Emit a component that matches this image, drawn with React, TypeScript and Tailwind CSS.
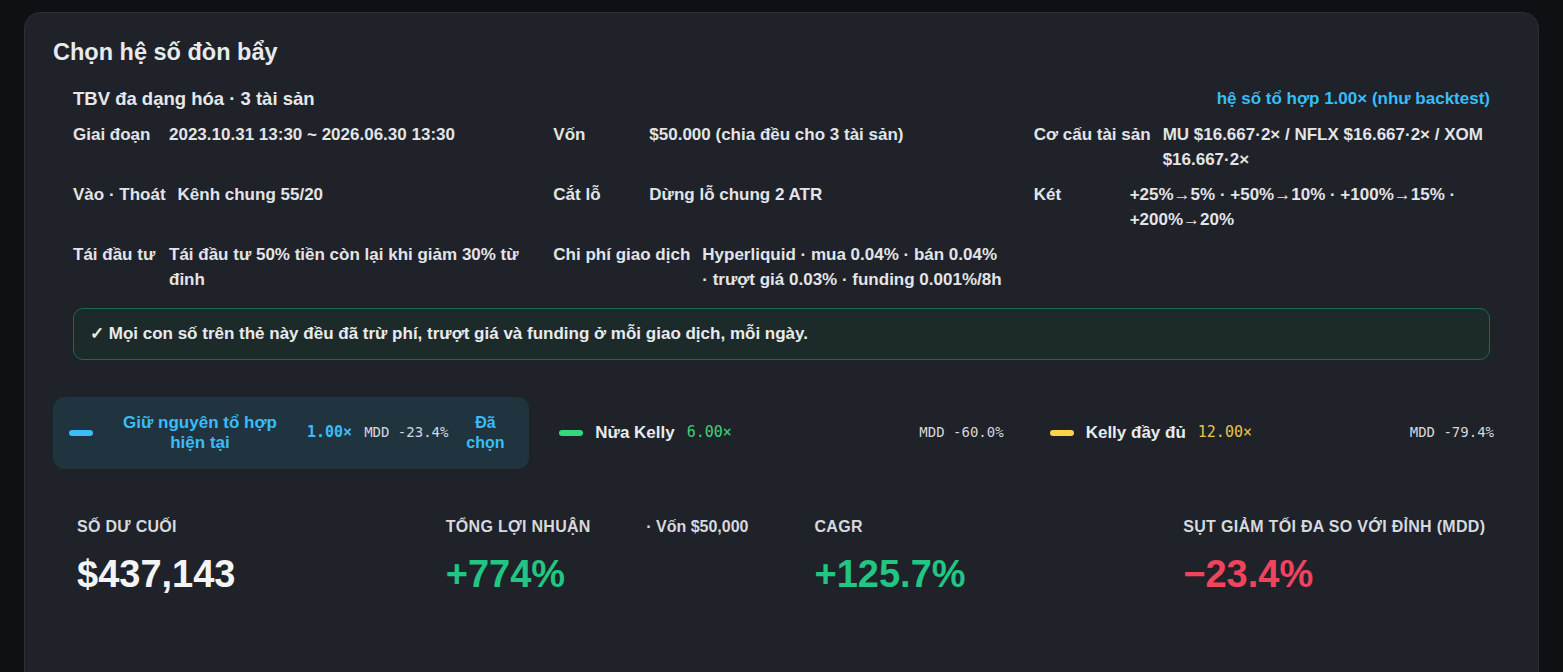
import React from 'react';

const sans = { fontFamily: '"Liberation Sans", Arial, sans-serif' };
const mono = { fontFamily: '"DejaVu Sans Mono", monospace' };

const info = [
  { label: 'Giai đoạn', value: '2023.10.31 13:30 ~ 2026.06.30 13:30' },
  { label: 'Vốn', value: '$50.000 (chia đều cho 3 tài sản)' },
  { label: 'Cơ cấu tài sản', value: 'MU $16.667·2× / NFLX $16.667·2× / XOM $16.667·2×' },
  { label: 'Vào · Thoát', value: 'Kênh chung 55/20' },
  { label: 'Cắt lỗ', value: 'Dừng lỗ chung 2 ATR' },
  { label: 'Két', value: '+25%→5% · +50%→10% · +100%→15% · +200%→20%' },
  { label: 'Tái đầu tư', value: 'Tái đầu tư 50% tiền còn lại khi giảm 30% từ đỉnh' },
  { label: 'Chi phí giao dịch', value: 'Hyperliquid · mua 0.04% · bán 0.04% ·\u00a0trượt giá 0.03% · funding 0.001%/8h' },
];

const options = [
  { name: 'Giữ nguyên tổ hợp hiện tại', mult: '1.00×', mdd: 'MDD -23.4%', bar: 'bg-[#38bdf8]', multColor: 'text-[#38bdf8] font-bold', selected: true },
  { name: 'Nửa Kelly', mult: '6.00×', mdd: 'MDD -60.0%', bar: 'bg-[#34d97b]', multColor: 'text-[#3fcf7f]', selected: false },
  { name: 'Kelly đầy đủ', mult: '12.00×', mdd: 'MDD -79.4%', bar: 'bg-[#fcd34d]', multColor: 'text-[#e6c34a]', selected: false },
];

const stats = [
  { label: 'SỐ DƯ CUỐI', extra: '', value: '$437,143', color: 'text-[#f3f4f6]' },
  { label: 'TỔNG LỢI NHUẬN', extra: '· Vốn $50,000', value: '+774%', color: 'text-[#22c583]' },
  { label: 'CAGR', extra: '', value: '+125.7%', color: 'text-[#22c583]' },
  { label: 'SỤT GIẢM TỐI ĐA SO VỚI ĐỈNH (MDD)', extra: '', value: '−23.4%', color: 'text-[#f0435e]' },
];

export default function App() {
  return (
    <div className="min-h-screen bg-[#0e1013] px-6 pt-3 overflow-hidden" style={sans}>
      <div className="rounded-2xl border border-[#2a2e35] bg-[#1f2228] px-7 pt-[23px] pb-24">
        <h2 className="text-[23.5px] font-bold leading-8 text-[#e8eaed]">Chọn hệ số đòn bẩy</h2>

        {/* Strategy summary */}
        <div className="px-5 mt-[18px]">
          <div className="flex items-center justify-between">
            <span className="text-[18.5px] font-bold leading-[25px] text-[#e5e7eb]">TBV đa dạng hóa · 3 tài sản</span>
            <span className="text-[17px] font-bold text-[#38bdf8]">hệ số tổ hợp 1.00× (như backtest)</span>
          </div>
          <div className="mt-[10px] grid grid-cols-3 gap-x-6 gap-y-[10px]">
            {info.map((row) => (
              <div key={row.label} className="flex gap-3 text-[17px] font-bold leading-[25px] text-[#e2e4e8]">
                <span className="min-w-[84px] shrink-0">{row.label}</span>
                <span>{row.value}</span>
              </div>
            ))}
          </div>
          <div className="mt-4 rounded-[10px] border border-[#1f6a4d] bg-[#1d2a2a] px-4 py-[12.5px] text-[17px] font-bold leading-[25px] text-[#e8eaed]">
            ✓ Mọi con số trên thẻ này đều đã trừ phí, trượt giá và funding ở mỗi giao dịch, mỗi ngày.
          </div>
        </div>

        {/* Leverage choices */}
        <div className="mt-[37px] grid grid-cols-3 gap-[14px]">
          {options.map((o) => (
            <div
              key={o.name}
              className={`flex items-center gap-3 rounded-xl px-4 py-4 ${o.selected ? 'bg-[#20343f]' : ''}`}
            >
              <span className={`h-[6px] w-6 shrink-0 rounded-full ${o.bar}`} />
              <span
                className={`text-[17px] font-bold leading-5 ${o.selected ? 'w-[190px] shrink-0 text-center text-[#38bdf8]' : 'text-[#e8eaed]'}`}
              >
                {o.name}
              </span>
              <span className={`whitespace-nowrap text-[15px] ${o.multColor}`} style={mono}>
                {o.mult}
              </span>
              <span
                className={`whitespace-nowrap text-[14px] text-[#d4d7dc] ${o.selected ? '' : 'ml-auto'}`}
                style={mono}
              >
                {o.mdd}
              </span>
              {o.selected && (
                <span className="w-[50px] shrink-0 text-center text-[16px] font-bold leading-5 text-[#38bdf8]">Đã chọn</span>
              )}
            </div>
          ))}
        </div>

        {/* Result stats */}
        <div className="mt-[46px] grid grid-cols-4 gap-x-[66px] px-6">
          {stats.map((s) => (
            <div key={s.label}>
              <div className="flex justify-between whitespace-nowrap text-[16px] font-bold leading-6 tracking-[0.3px] text-[#d6d9de]">
                <span>{s.label}</span>
                {s.extra && <span className="tracking-normal">{s.extra}</span>}
              </div>
              <div className={`mt-3 text-[38px] font-bold leading-[46px] ${s.color}`}>{s.value}</div>
            </div>
          ))}
        </div>
      </div>
    </div>
  );
}
